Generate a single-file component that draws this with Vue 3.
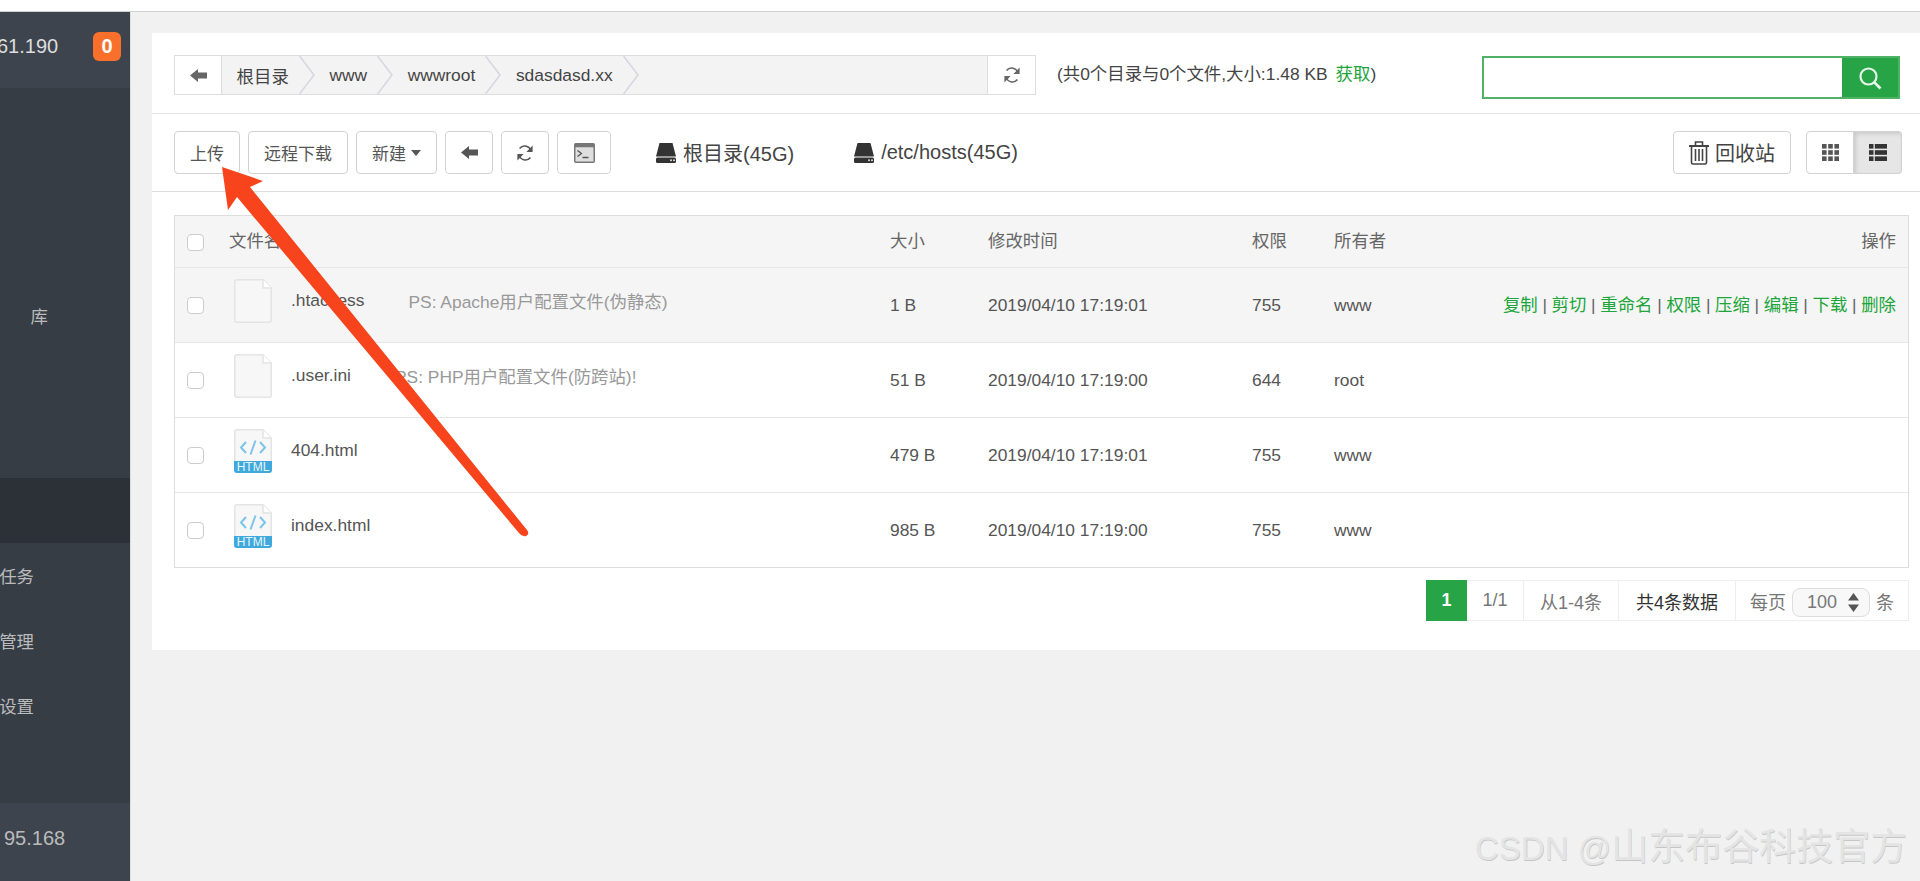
<script setup>
const navItems = [
  { key: "home", text: "" },
  { key: "site", text: "" },
  { key: "ftp", text: "" },
  { key: "db", text: "库", tail: true },
  { key: "ctrl", text: "" },
  { key: "safe", text: "" },
  { key: "files", text: "", active: true },
  { key: "cron", text: "计划任务" },
  { key: "soft", text: "软件管理" },
  { key: "config", text: "面板设置" }
];

const crumbs = ["根目录", "www", "wwwroot", "sdasdasd.xx"];

const files = [
  { name: ".htaccess", ps: "PS: Apache用户配置文件(伪静态)", size: "1 B", time: "2019/04/10 17:19:01", perm: "755", owner: "www", html: false, hover: true },
  { name: ".user.ini", ps: "PS: PHP用户配置文件(防跨站)!", size: "51 B", time: "2019/04/10 17:19:00", perm: "644", owner: "root", html: false },
  { name: "404.html", ps: "", size: "479 B", time: "2019/04/10 17:19:01", perm: "755", owner: "www", html: true },
  { name: "index.html", ps: "", size: "985 B", time: "2019/04/10 17:19:00", perm: "755", owner: "www", html: true }
];

const actions = ["复制", "剪切", "重命名", "权限", "压缩", "编辑", "下载", "删除"];
const disks = ["根目录(45G)", "/etc/hosts(45G)"];
</script>

<template>
  <div class="page">
    <div class="top-strip"></div>
    <div class="body">
      <aside class="sidebar">
        <div class="side-head">
          <span class="side-ip">61.190</span>
          <span class="badge">0</span>
        </div>
        <nav class="nav">
          <div
            v-for="item in navItems"
            :key="item.key"
            class="nav-item"
            :class="{ 'nav-item--active': item.active, 'nav-item--tail': item.tail }"
          >
            <span>{{ item.text }}</span>
          </div>
        </nav>
        <div class="side-foot">95.168</div>
      </aside>

      <main class="main">
        <section class="card">
          <div class="path-row">
            <div class="path-bar">
              <button class="path-btn path-btn--back">
                <svg width="17" height="13" viewBox="0 0 17 13"><path d="M0 6.5 L8 0 V3.5 H17 V9.5 H8 V13 Z" fill="#666" /></svg>
              </button>
              <div class="crumbs">
                <template v-for="crumb in crumbs" :key="crumb">
                  <span class="crumb">{{ crumb }}</span>
                  <svg class="chevron" width="16" height="38" viewBox="0 0 16 38"><polyline points="0.5,0 15,19 0.5,38" fill="none" stroke="#d5d6de" stroke-width="1.5" /></svg>
                </template>
              </div>
              <button class="path-btn path-btn--refresh">
                <svg width="18" height="18" viewBox="0 0 18 18">
                  <path d="M15 7.5 A6.4 6.4 0 0 0 3.6 4.6 M3 10.5 A6.4 6.4 0 0 0 14.4 13.4" fill="none" stroke="#666" stroke-width="1.6" />
                  <path d="M16.6 1.6 V8 H10.4 Z M1.4 16.4 V10 H7.6 Z" fill="#666" />
                </svg>
              </button>
            </div>
            <div class="path-info">(共0个目录与0个文件,大小:1.48 KB<a class="get-link">获取</a>)</div>
            <div class="search">
              <input class="search-input" type="text" />
              <button class="search-btn">
                <svg width="24" height="24" viewBox="0 0 24 24">
                  <circle cx="10.5" cy="10.5" r="8" fill="none" stroke="#e8f6ea" stroke-width="2.2" />
                  <path d="M16.5 16.5 L22.5 22.5" stroke="#e8f6ea" stroke-width="2.6" />
                </svg>
              </button>
            </div>
          </div>

          <div class="toolbar">
            <button class="btn">上传</button>
            <button class="btn">远程下载</button>
            <button class="btn">新建<i class="caret"></i></button>
            <button class="btn btn--icon">
              <svg width="17" height="13" viewBox="0 0 17 13"><path d="M0 6.5 L8 0 V3.5 H17 V9.5 H8 V13 Z" fill="#555" /></svg>
            </button>
            <button class="btn btn--icon">
              <svg width="18" height="18" viewBox="0 0 18 18">
                <path d="M15 7.5 A6.4 6.4 0 0 0 3.6 4.6 M3 10.5 A6.4 6.4 0 0 0 14.4 13.4" fill="none" stroke="#555" stroke-width="1.6" />
                <path d="M16.6 1.6 V8 H10.4 Z M1.4 16.4 V10 H7.6 Z" fill="#555" />
              </svg>
            </button>
            <button class="btn btn--term">
              <svg width="21" height="20" viewBox="0 0 21 20">
                <rect x="0.75" y="0.75" width="19.5" height="18.5" rx="1" fill="#dedede" stroke="#777" stroke-width="1.5" />
                <rect x="0.75" y="0.75" width="19.5" height="3.5" fill="#777" />
                <path d="M3.5 7.5 L7.5 10.5 L3.5 13.5 M8.5 14.5 H14.5" fill="none" stroke="#555" stroke-width="1.3" />
              </svg>
            </button>
            <div class="disks">
              <div v-for="disk in disks" :key="disk" class="disk">
                <svg width="20" height="20" viewBox="0 0 20 20">
                  <path d="M3.5 0 H16.5 L20 13.5 H0 Z" fill="#333" />
                  <rect y="14.5" width="20" height="5.5" rx="1.5" fill="#333" />
                  <circle cx="15" cy="17.2" r="1" fill="#ddd" />
                  <circle cx="18" cy="17.2" r="1" fill="#ddd" />
                </svg>
                <span>{{ disk }}</span>
              </div>
            </div>
            <button class="btn btn--trash">
              <svg width="20" height="24" viewBox="0 0 20 24" fill="none" stroke="#444">
                <path d="M0 5 H20" stroke-width="2" />
                <path d="M6.5 4 V1 H13.5 V4" stroke-width="1.6" />
                <path d="M2.5 6 V21.5 Q2.5 23 4 23 H16 Q17.5 23 17.5 21.5 V6" stroke-width="1.6" />
                <path d="M6.5 8 V20 M10 8 V20 M13.5 8 V20" stroke-width="1.6" />
              </svg>
              <span>回收站</span>
            </button>
            <div class="view-group">
              <button class="view-btn">
                <svg width="17" height="17" viewBox="0 0 17 17" fill="#555">
                  <rect width="4.6" height="4.6" /><rect x="6.2" width="4.6" height="4.6" /><rect x="12.4" width="4.6" height="4.6" />
                  <rect y="6.2" width="4.6" height="4.6" /><rect x="6.2" y="6.2" width="4.6" height="4.6" /><rect x="12.4" y="6.2" width="4.6" height="4.6" />
                  <rect y="12.4" width="4.6" height="4.6" /><rect x="6.2" y="12.4" width="4.6" height="4.6" /><rect x="12.4" y="12.4" width="4.6" height="4.6" />
                </svg>
              </button>
              <button class="view-btn view-btn--active">
                <svg width="18" height="17" viewBox="0 0 18 17" fill="#333">
                  <rect width="4.5" height="4.6" /><rect x="5.8" width="12.2" height="4.6" />
                  <rect y="6.2" width="4.5" height="4.6" /><rect x="5.8" y="6.2" width="12.2" height="4.6" />
                  <rect y="12.4" width="4.5" height="4.6" /><rect x="5.8" y="12.4" width="12.2" height="4.6" />
                </svg>
              </button>
            </div>
          </div>

          <div class="table">
            <div class="row row--head">
              <span class="check"></span>
              <span>文件名</span>
              <span>大小</span>
              <span>修改时间</span>
              <span>权限</span>
              <span>所有者</span>
              <span class="cell-right">操作</span>
            </div>
            <div
              v-for="file in files"
              :key="file.name"
              class="row"
              :class="{ 'row--hover': file.hover }"
            >
              <span class="check"></span>
              <div class="name-cell">
                <svg class="file-icon" width="38" height="44" viewBox="0 0 38 44">
                  <path d="M3 0.75 H29 L37.25 9 V41 Q37.25 43.25 35 43.25 H3 Q0.75 43.25 0.75 41 V3 Q0.75 0.75 3 0.75 Z" fill="#f7f7f7" stroke="#e4e4e4" stroke-width="1.5" />
                  <path d="M29 0.75 V9 H37.25" fill="#fff" stroke="#e4e4e4" stroke-width="1.5" />
                  <template v-if="file.html">
                    <path d="M12 13 L7 18.5 L12 24 M26 13 L31 18.5 L26 24 M21.5 11.5 L16.5 25.5" fill="none" stroke="#7cc4ea" stroke-width="2" />
                    <path d="M0 32 H38 V41 Q38 44 35 44 H3 Q0 44 0 41 Z" fill="#3fa9dc" />
                    <text x="19" y="42.3" class="html-label" text-anchor="middle">HTML</text>
                  </template>
                </svg>
                <span class="file-name">{{ file.name }}</span>
                <span v-if="file.ps" class="file-ps">{{ file.ps }}</span>
              </div>
              <span>{{ file.size }}</span>
              <span>{{ file.time }}</span>
              <span>{{ file.perm }}</span>
              <span>{{ file.owner }}</span>
              <div v-if="file.hover" class="actions">
                <template v-for="(action, index) in actions" :key="action">
                  <span v-if="index" class="sep">|</span>
                  <a>{{ action }}</a>
                </template>
              </div>
            </div>
          </div>

          <div class="pager">
            <span class="pg pg--active">1</span>
            <span class="pg pg--pages">1/1</span>
            <span class="pg pg--range">从1-4条</span>
            <span class="pg pg--total">共4条数据</span>
            <span class="pg pg--size">
              每页
              <span class="size-select">
                <span>100</span>
                <svg width="11" height="19" viewBox="0 0 11 19" fill="#555"><path d="M5.5 0 L11 7.5 H0 Z M5.5 19 L0 11.5 H11 Z" /></svg>
              </span>
              条
            </span>
          </div>
        </section>
      </main>
    </div>

    <svg class="arrow" width="1920" height="881" viewBox="0 0 1920 881">
      <path
        d="M222 167 L263 181 L250 187 L527 530 Q530 534 526 536 Q522 537 519 533 L237 197 L228 210 Z"
        fill="#f7441c"
      />
    </svg>
    <div class="watermark">CSDN @<span class="watermark-cjk">山东布谷科技官方</span></div>
  </div>
</template>

<style>
html,
body {
  margin: 0;
  background: #f1f1f1;
}
</style>

<style scoped>
.page {
  position: relative;
  width: 1920px;
  height: 881px;
  overflow: hidden;
  display: flex;
  flex-direction: column;
  background: #f1f1f1;
  color: #555;
  font-family: "Liberation Sans", "Noto Sans CJK SC", sans-serif;
  font-size: 17.4px;
}

button {
  font: inherit;
  color: inherit;
  cursor: pointer;
}

.top-strip {
  height: 11px;
  flex: none;
  background: #fff;
  border-bottom: 1px solid #d0d0d0;
}

.body {
  flex: 1;
  display: flex;
  min-height: 0;
}

.sidebar {
  width: 130px;
  flex: none;
  display: flex;
  flex-direction: column;
  background: #363d45;
  color: #bbb;
  overflow: hidden;
  border-right: 1px solid #ddd;
  box-sizing: content-box;
}

.side-head {
  height: 76px;
  flex: none;
  display: flex;
  align-items: flex-start;
  justify-content: space-between;
  padding: 20px 9px 0 0;
  box-sizing: border-box;
  background: #3d444d;
  color: #ddd;
  font-size: 20px;
}

.side-ip {
  margin-left: -3px;
  line-height: 29px;
}

.badge {
  width: 28px;
  height: 29px;
  border-radius: 6px;
  background: #f8702c;
  color: #fff;
  font-weight: 700;
  font-size: 20px;
  line-height: 29px;
  text-align: center;
}

.nav {
  flex: 1;
}

.nav-item {
  height: 65px;
  display: flex;
  align-items: center;
  justify-content: flex-end;
  padding-right: 96px;
  white-space: nowrap;
  overflow: hidden;
}

.nav-item--tail {
  padding-right: 82px;
}

.nav-item--active {
  background: #2c3138;
}

.side-foot {
  height: 78px;
  flex: none;
  padding-left: 4px;
  box-sizing: border-box;
  background: #3d444d;
  font-size: 20px;
  line-height: 70px;
}

.main {
  flex: 1;
  min-width: 0;
  padding: 21px 0 0 21px;
}

.card {
  background: #fff;
  padding-bottom: 29px;
}

.path-row {
  display: flex;
  align-items: flex-start;
  padding: 22px 20px 0 22px;
  height: 81px;
  box-sizing: border-box;
  border-bottom: 1.5px solid #e6e6e6;
}

.path-bar {
  width: 862px;
  height: 40px;
  flex: none;
  display: flex;
  box-sizing: border-box;
  border: 1.5px solid #ddd;
  background: #f3f3f3;
}

.path-btn {
  flex: none;
  display: flex;
  align-items: center;
  justify-content: center;
  padding: 0;
  border: 0;
  background: #fff;
}

.path-btn--back {
  width: 47px;
  border-right: 1.5px solid #ddd;
}

.path-btn--refresh {
  width: 48px;
  border-left: 1.5px solid #ddd;
}

.crumbs {
  flex: 1;
  display: flex;
  align-items: center;
  min-width: 0;
}

.crumb {
  padding: 0 10px 0 14.6px;
  color: #444;
  white-space: nowrap;
}

.chevron {
  flex: none;
}

.path-info {
  margin-left: 21px;
  line-height: 38px;
  white-space: nowrap;
  color: #444;
}

.get-link {
  margin-left: 8px;
  color: #20a53a;
}

.search {
  margin: 1px 0 0 auto;
  width: 418px;
  height: 43px;
  display: flex;
  box-sizing: border-box;
  border: 2px solid #4fb264;
}

.search-input {
  flex: 1;
  min-width: 0;
  border: 0;
  outline: 0;
  padding: 0;
  background: #fff;
}

.search-btn {
  width: 56px;
  flex: none;
  display: flex;
  align-items: center;
  justify-content: center;
  padding: 0;
  border: 0;
  background: #27a546;
}

.toolbar {
  height: 78px;
  display: flex;
  align-items: center;
  gap: 8px;
  padding: 0 18px 0 22px;
  box-sizing: border-box;
  border-bottom: 1.5px solid #ddd;
  font-size: 17px;
}

.btn {
  height: 43px;
  flex: none;
  display: inline-flex;
  align-items: center;
  justify-content: center;
  padding: 0 15px;
  box-sizing: border-box;
  border: 1.5px solid #d2d2d2;
  border-radius: 4px;
  background: #fff;
  color: #555;
  white-space: nowrap;
}

.caret {
  width: 0;
  height: 0;
  margin-left: 5px;
  border-top: 6px solid #555;
  border-left: 5px solid transparent;
  border-right: 5px solid transparent;
}

.btn--icon {
  width: 48px;
  padding: 0;
}

.btn--term {
  width: 54px;
  padding: 0;
}

.disks {
  display: flex;
  gap: 60px;
  margin-left: 37px;
}

.disk {
  display: flex;
  align-items: center;
  gap: 7px;
  color: #444;
  font-size: 20px;
  white-space: nowrap;
}

.btn--trash {
  width: 118px;
  margin-left: auto;
  gap: 6px;
  padding: 0;
  color: #444;
  font-size: 20px;
}

.view-group {
  display: flex;
  margin-left: 7px;
}

.view-btn {
  width: 48px;
  height: 43px;
  display: flex;
  align-items: center;
  justify-content: center;
  padding: 0;
  box-sizing: border-box;
  border: 1.5px solid #d2d2d2;
  border-radius: 4px 0 0 4px;
  background: #fff;
}

.view-btn--active {
  border-radius: 0 4px 4px 0;
  border-left: 0;
  background: #e6e6e6;
  box-shadow: inset 2px 2px 4px rgba(0, 0, 0, 0.12);
}

.table {
  margin: 23px 11px 0 22px;
  border: 1.5px solid #ddd;
}

.row {
  height: 75px;
  display: grid;
  grid-template-columns: 54px 661px 98px 264px 82px 100px 1fr;
  align-items: center;
  box-sizing: border-box;
  border-top: 1.5px solid #e6e6e6;
  color: #555;
  white-space: nowrap;
}

.row--head {
  height: 51px;
  border-top: 0;
  padding-bottom: 4px;
  background: #f5f5f5;
  color: #666;
}

.row--head .check {
  margin-top: 5px;
}

.row--hover {
  background: #f5f5f5;
}

.check {
  width: 17px;
  height: 17px;
  margin-left: 12px;
  box-sizing: border-box;
  border: 1.5px solid #ccc;
  border-radius: 4px;
  background: #fff;
}

.cell-right {
  text-align: right;
  padding-right: 12px;
}

.name-cell {
  display: flex;
  align-items: center;
  padding-left: 5px;
}

.file-icon {
  flex: none;
  margin-top: -8px;
}

.file-name {
  margin: -9px 0 0 19px;
}

.file-ps {
  margin: -9px 0 0 44px;
  color: #999;
}

.html-label {
  fill: #e8f5fb;
  font-size: 12px;
  font-weight: 400;
}

.actions {
  margin-top: -4px;
  padding-right: 12px;
  text-align: right;
  color: #20a53a;
}

.sep {
  margin: 0 4.7px;
  color: #666;
}

.pager {
  display: flex;
  justify-content: flex-end;
  margin: 12px 11px 0 0;
  font-size: 18px;
}

.pg {
  height: 41px;
  display: flex;
  align-items: center;
  justify-content: center;
  box-sizing: border-box;
  border: 1.5px solid #eee;
  border-left: 0;
  color: #777;
  white-space: nowrap;
}

.pg--active {
  width: 41px;
  border: 0;
  background: #27a546;
  color: #fff;
  font-weight: 700;
}

.pg--pages {
  width: 57px;
}

.pg--range {
  width: 95px;
}

.pg--total {
  width: 117px;
  color: #333;
}

.pg--size {
  width: 173px;
  gap: 6px;
}

.size-select {
  width: 78px;
  height: 29px;
  margin-top: 3px;
  display: flex;
  align-items: center;
  justify-content: space-between;
  padding: 0 10px 0 14px;
  box-sizing: border-box;
  border: 1.5px solid #ddd;
  border-radius: 8px;
  background: #f8f8f8;
}

.arrow {
  position: absolute;
  left: 0;
  top: 0;
  pointer-events: none;
}

.watermark {
  position: absolute;
  left: 1475px;
  top: 826px;
  color: #e4e4e4;
  font-size: 33px;
  line-height: 44px;
  white-space: nowrap;
  text-shadow: 0.6px 0.6px 0.5px #c6c6c6;
}

.watermark-cjk {
  font-size: 37px;
}
</style>
